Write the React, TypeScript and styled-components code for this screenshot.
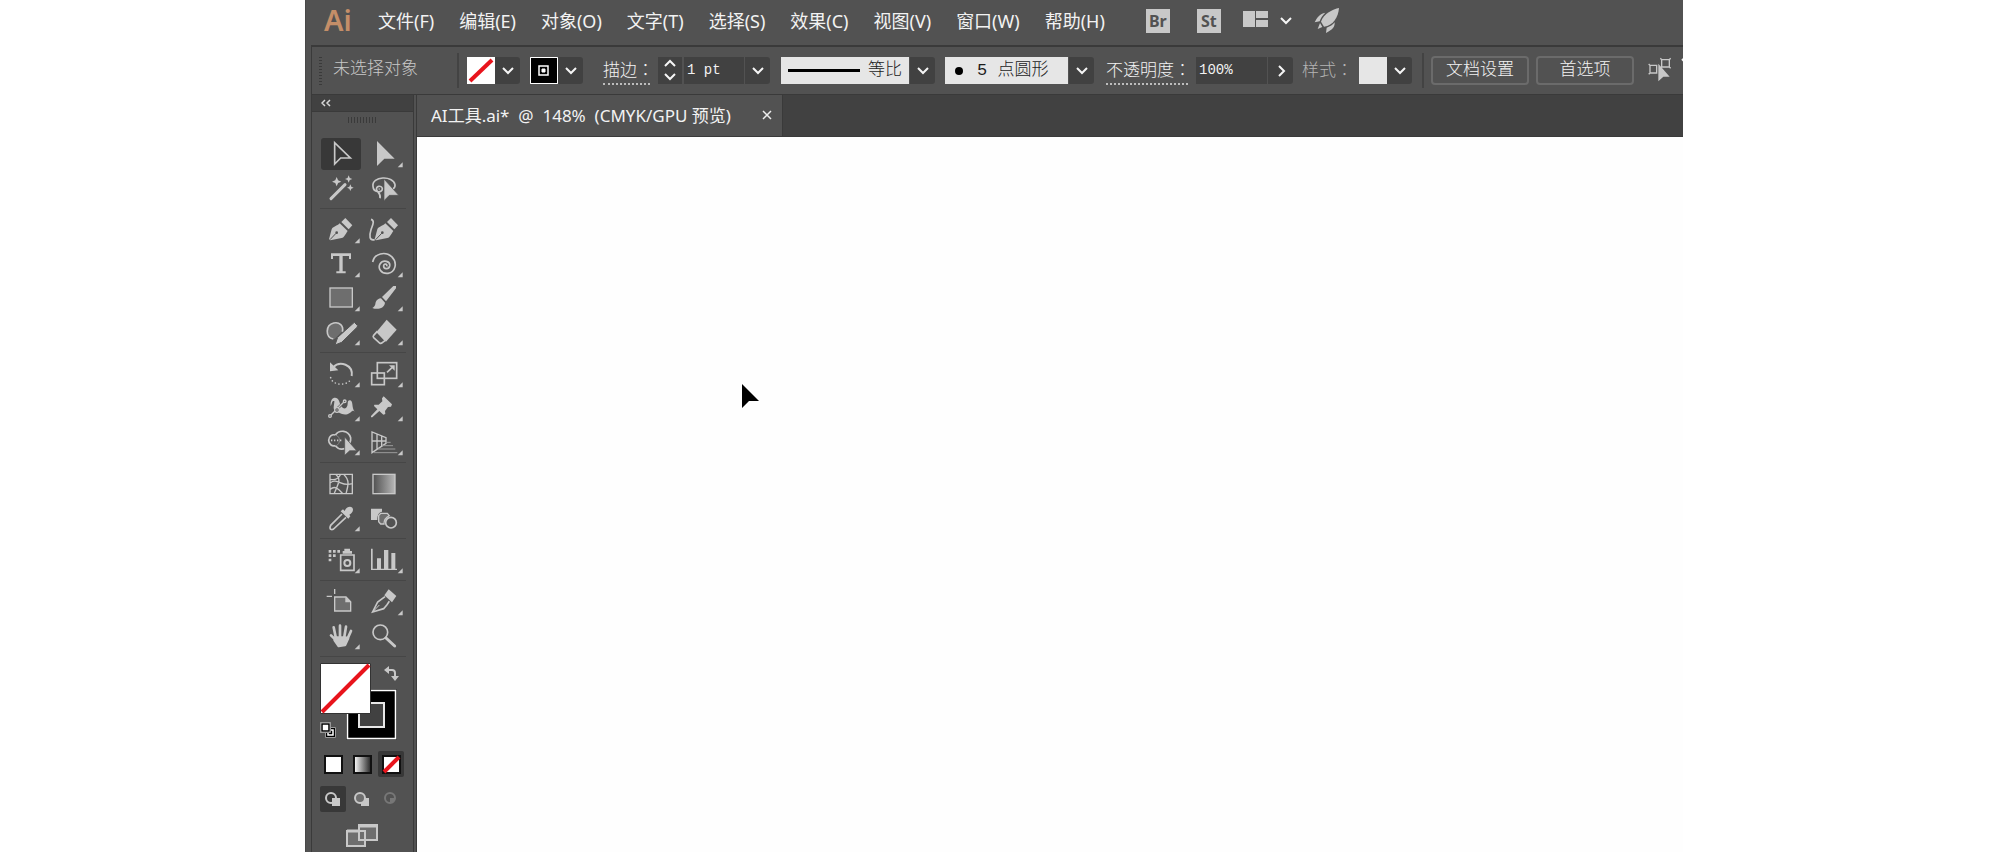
import React from 'react';
import styled, { createGlobalStyle, css } from 'styled-components';

const C = '#c8c8c8';
const BAR = '#525252';
const DARK = '#414141';
const LINE = '#3a3a3a';
const SHADE = '#6e6e6e';
const RED = '#e8141c';
const UI = `"Noto Sans", "Noto Sans CJK SC", sans-serif`;
const SONG = `"Liberation Mono", "Noto Sans CJK SC", monospace`;

const Global = createGlobalStyle`
  * { box-sizing: border-box; }
  body { margin: 0; background: #fff; font-family: ${UI}; color: #f2f2f2; }
  button, input, select { font: inherit; color: inherit; margin: 0; }
  button { border: 0; background: none; padding: 0; }
  svg { display: block; flex: none; }
`;

const AppWindow = styled.div`
  margin: 0 317px 0 305px;
  min-height: 100vh;
  display: flex;
  flex-direction: column;
  background: ${BAR};
  border-left: 1px solid #484848;
  overflow: hidden;
`;

const MenuBar = styled.header`
  height: 45px;
  display: flex;
  align-items: center;
  padding: 0 18px 3px;
  flex: none;
`;

const Logo = styled.div`
  width: 54px;
  padding-bottom: 3px;
  color: #c48e68;
  font-size: 29px;
  font-weight: 600;
  line-height: 38px;
`;

const Menus = styled.nav`
  display: flex;
  gap: 25px;
`;

const MenuButton = styled.button`
  font-size: 18px;
  line-height: 24px;
  white-space: nowrap;
`;

const AppLinks = styled.div`
  display: flex;
  align-items: center;
  margin-left: 41px;
  height: 24px;
`;

const AppBadge = styled.button<{ $gap: number }>`
  width: 24px;
  height: 24px;
  margin-right: ${p => p.$gap}px;
  background: ${C};
  color: ${BAR};
  font-size: 16px;
  line-height: 24px;
  font-weight: 700;
`;

const IconButton = styled.button<{ $gap?: number }>`
  margin-right: ${p => p.$gap ?? 0}px;
  display: flex;
`;

const Body = styled.div`
  flex: 1;
  margin-left: 5px;
  border-left: 1px solid ${LINE};
  border-top: 2px solid ${LINE};
  display: flex;
  flex-direction: column;
  min-width: 0;
`;

const ControlBar = styled.section`
  height: 48px;
  flex: none;
  display: flex;
  align-items: center;
  padding-left: 7px;
  border-bottom: 1px solid ${LINE};
  font-family: ${SONG};
  font-size: 17px;
  font-weight: 300;
  white-space: nowrap;
  overflow: hidden;
  > * { flex: none; }
`;

const Grip = styled.div`
  width: 3px;
  height: 28px;
  background: repeating-linear-gradient(${LINE} 0 1px, transparent 1px 3px);
`;

const Status = styled.div`
  width: 124px;
  margin-left: 11px;
  padding-bottom: 8px;
  color: #c8c8c8;
`;

const Divider = styled.div<{ $left?: number }>`
  width: 2px;
  height: 35px;
  margin-left: ${p => p.$left ?? 0}px;
  background: #434343;
`;

const Group = styled.div<{ $left: number }>`
  display: flex;
  margin-left: ${p => p.$left}px;
  height: 27px;
  border-radius: 0 3px 3px 0;
  overflow: hidden;
`;

const Arrow = styled.button<{ $split?: boolean }>`
  width: 25px;
  height: 27px;
  display: flex;
  align-items: center;
  justify-content: center;
  background: ${DARK};
  ${p => p.$split && css`margin-left: 1px;`}
`;

const Swatch = styled.button`
  width: 28px;
  height: 27px;
  background: #e6e6e6;
`;

const FieldLabel = styled.label<{ $width: number; $left: number; $plain?: boolean }>`
  width: ${p => p.$width}px;
  margin-left: ${p => p.$left}px;
  line-height: 22px;
  padding-top: 1px;
  color: ${p => (p.$plain ? '#b4b4b4' : '#f2f2f2')};
  border-bottom: 2px dotted ${p => (p.$plain ? 'transparent' : '#bdbdbd')};
  span { font-family: "Noto Sans CJK TC", sans-serif; }
`;

const TextField = styled.input<{ $width: number }>`
  width: ${p => p.$width}px;
  height: 27px;
  border: 0;
  padding: 0 0 2px 3px;
  background: ${DARK};
  font-size: 14px;
  outline: 0;
`;

const Stepper = styled.div`
  width: 24px;
  margin-right: 2px;
  background: ${DARK};
  display: flex;
  flex-direction: column;
  align-items: center;
  justify-content: space-between;
  padding: 2px 0;
`;

const LightField = styled.div<{ $width: number }>`
  width: ${p => p.$width}px;
  background: #e6e6e6;
  color: #1c1c1c;
  display: flex;
  align-items: center;
  padding-left: 7px;
`;

const LightSelect = styled.select<{ $left: number }>`
  appearance: none;
  border: 0;
  background: none;
  padding: 0;
  margin-left: ${p => p.$left}px;
  height: 27px;
  line-height: 24px;
  outline: 0;
`;

const OutlineButton = styled.button`
  width: 98px;
  height: 29px;
  margin-left: 7px;
  border: 2px solid #6b6b6b;
  border-radius: 4px;
  line-height: 24px;
`;

const Workspace = styled.div`
  flex: 1;
  display: flex;
  min-width: 0;
`;

const ToolPanel = styled.aside`
  width: 105px;
  flex: none;
  display: flex;
  flex-direction: column;
  border-right: 4px double ${LINE};
`;

const PanelHeader = styled.button`
  height: 17px;
  flex: none;
  background: ${DARK};
  border-bottom: 1px solid ${LINE};
  padding: 0 0 0 9px;
  display: flex;
  align-items: center;
`;

const PanelGrip = styled.div`
  width: 28px;
  height: 6px;
  margin: 5px 0 15px 36px;
  background: repeating-linear-gradient(90deg, ${LINE} 0 1px, transparent 1px 3px);
`;

const ToolGroup = styled.div`
  display: grid;
  grid-template-columns: 40px 40px;
  gap: 2px 3px;
  margin: 0 7px 5px 8px;
  padding: 0 0 4px 1px;
  border-bottom: 1px solid #464646;
`;

const ToolButton = styled.button<{ $active?: boolean }>`
  width: 40px;
  height: 32px;
  border-radius: 3px;
  background: ${p => (p.$active ? '#383838' : 'transparent')};
`;

const PaintArea = styled.div`
  position: relative;
  height: 89px;
  flex: none;
`;

const PaintSpot = styled.button<{ $x: number; $y: number }>`
  position: absolute;
  left: ${p => p.$x}px;
  top: ${p => p.$y}px;
`;

const ModeRow = styled.div<{ $bottom: number }>`
  display: flex;
  align-items: center;
  gap: 3px;
  padding-left: 8px;
  margin-bottom: ${p => p.$bottom}px;
`;

const ModeButton = styled.button<{ $active?: boolean }>`
  width: 26px;
  height: 26px;
  display: flex;
  align-items: center;
  justify-content: center;
  border-radius: 2px;
  background: ${p => (p.$active ? '#383838' : 'transparent')};
`;

const ScreenMode = styled.button`
  margin: 0 0 4px 34px;
  width: 33px;
`;

const DocumentArea = styled.main`
  flex: 1;
  min-width: 0;
  display: flex;
  flex-direction: column;
`;

const TabBar = styled.div`
  height: 42px;
  flex: none;
  background: ${DARK};
  border-bottom: 1px solid ${LINE};
  display: flex;
`;

const Tab = styled.div`
  display: flex;
  align-items: center;
  gap: 31px;
  padding: 0 10px 2px 14px;
  background: ${BAR};
  border-right: 1px solid ${LINE};
  font-size: 17px;
  white-space: pre;
`;

const Canvas = styled.div`
  position: relative;
  flex: 1;
  background: #fefefe;
`;

const Pointer = styled.svg`
  position: absolute;
  left: 325px;
  top: 247px;
`;

const chevrons = {
  down: 'M1 2 6 7 11 2',
  up: 'M1 7 6 2 11 7',
  right: 'M4 0 9 5 4 10',
};

const Chevron = ({ dir = 'down' }: { dir?: keyof typeof chevrons }) => (
  <svg width="12" height="10" viewBox="0 0 12 10" overflow="visible" fill="none" stroke="#f5f5f5" strokeWidth="2">
    <path d={chevrons[dir]} />
  </svg>
);

type Tool = { name: string; x: number; y: number; art: React.ReactNode; more?: boolean; active?: boolean };

const solid = { fill: C };
const line = { fill: 'none', stroke: C, strokeWidth: 5 };

const Nib = () => (
  <>
    <path {...solid} d="M124 51 136 39 157 61 146 73Z" />
    <path {...solid} d="M119 55 143 78C137 86 133 98 125 99L91 106 87 103 95 73C98 65 112 63 119 55Z" />
    <path d="M90 104 108 85" stroke={BAR} strokeWidth="3" />
    <circle cx="110" cy="83" r="4" fill={BAR} />
  </>
);

const star = (x: number, y: number, r: number) =>
  `M${x} ${y - r}L${x + r * 0.3} ${y - r * 0.3} ${x + r} ${y} ${x + r * 0.3} ${y + r * 0.3} ${x} ${y + r} ${x - r * 0.3} ${y + r * 0.3} ${x - r} ${y} ${x - r * 0.3} ${y - r * 0.3}Z`;

// Artwork is drawn at three units to the pixel; x and y are the origin of each icon's view box.
const groups: Tool[][] = [
  [
    { name: '选择工具', x: 63, y: 144, active: true, art: <path {...line} d="M104 158V222L122 204H151Z" /> },
    { name: '直接选择工具', x: 192, y: 144, more: true, art: <path {...solid} d="M231 153V228L253 206H284Z" /> },
    {
      name: '魔棒工具', x: 63, y: 246, art: (
        <>
          <path d="M93 326 135 284" stroke={C} strokeWidth="9" strokeLinecap="round" />
          <path {...solid} d={star(110, 275, 14) + star(146, 267, 11) + star(151, 293, 10)} />
        </>
      ),
    },
    {
      name: '套索工具', x: 192, y: 246, art: (
        <>
          <path {...line} d="M219 289C214 258 280 255 285 284 286 290 283 294 279 297M219 289C220 308 247 310 247 296 245 284 226 288 230 300 232 308 244 310 240 325M236 297h3" />
          <path {...solid} stroke={BAR} strokeWidth="2" d="M252 267V332L268 316H296Z" />
        </>
      ),
    },
  ],
  [
    { name: '钢笔工具', x: 63, y: 27, more: true, art: <Nib /> },
    {
      name: '曲率工具', x: 192, y: 27, art: (
        <>
          <g transform="translate(137 0)"><Nib /></g>
          <path {...line} d="M213 43C226 47 217 62 213 74 207 93 208 108 224 104" />
        </>
      ),
    },
    { name: '文字工具', x: 63, y: 129, more: true, art: <path {...solid} d="M93 145h60v17h-6v-9h-19v46h9v6h-28v-6h9v-46h-19v9h-6z" /> },
    { name: '螺旋线工具', x: 192, y: 129, more: true, art: <path {...line} d="M218 171C223 145 256 138 275 155 294 174 286 201 264 205 243 207 233 190 240 177 249 163 272 168 269 183 266 195 250 192 251 182 253 174 263 177 260 184" /> },
    { name: '矩形工具', x: 63, y: 231, more: true, art: <rect x="90" y="249" width="67" height="57" fill={SHADE} stroke={C} strokeWidth="4" /> },
    {
      name: '画笔工具', x: 192, y: 231, more: true, art: (
        <path {...solid} d="M288 250 288 243 280 243 246 276 258 289ZM243 280C228 282 227 292 226 298 224 305 220 308 217 309 232 315 253 311 255 293Z" />
      ),
    },
    {
      name: 'Shaper 工具', x: 63, y: 333, more: true, art: (
        <>
          <path d="M99 401C77 398 75 361 101 354 119 350 133 364 126 380L104 402Z" fill={SHADE} />
          <path {...line} d="M100 402C75 397 76 360 101 354 118 350 132 362 127 380" />
          <path {...solid} stroke={BAR} strokeWidth="3" d="M172 361 163 352 113 397 105 420 125 412 172 366Z" />
        </>
      ),
    },
    {
      name: '橡皮擦工具', x: 192, y: 333, more: true, art: (
        <>
          <path {...solid} d="M260 344 290 374 258 410 230 380Z" />
          <path {...line} d="M231 380 221 391Q218 395 221 398L239 414Q243 417 247 413L256 406Z" />
        </>
      ),
    },
  ],
  [
    {
      name: '旋转工具', x: 63, y: 24, more: true, art: (
        <>
          <path {...line} strokeWidth="6" d="M99 52C120 30 160 45 155 78" />
          <path {...solid} d="M90 37V64L115 61Z" />
          <path {...line} strokeLinecap="round" strokeDasharray="0 11" d="M92 83C98 108 143 108 152 88" />
        </>
      ),
    },
    {
      name: '比例缩放工具', x: 192, y: 24, more: true, art: (
        <>
          <rect {...line} x="232" y="38" width="58" height="47" />
          <rect {...line} x="215" y="69" width="38" height="35" />
          <path d="M261 67 276 53" stroke={C} strokeWidth="5" />
          <path {...solid} d="M267 46H284V62Z" />
        </>
      ),
    },
    {
      name: '宽度工具', x: 63, y: 126, more: true, art: (
        <>
          <path {...solid} d="M92 168C89 140 111 137 117 152 121 164 128 180 138 174 147 166 139 152 149 151 161 151 154 174 164 185 157 177 154 189 142 193 124 196 117 187 105 181 97 178 104 160 103 153 95 151 97 160 92 168Z" />
          <path d="M90 198 134 154" stroke={BAR} strokeWidth="8" />
          <path d="M90 198 134 154" stroke={C} strokeWidth="4" />
          <g fill={BAR} stroke={C} strokeWidth="4">
            <circle cx="90" cy="198" r="4" /><circle cx="111" cy="180" r="7" /><circle cx="134" cy="154" r="4" />
          </g>
          <circle cx="111" cy="180" r="2" fill={C} />
        </>
      ),
    },
    {
      name: '操控变形工具', x: 192, y: 126, more: true, art: (
        <path {...solid} d="M251 139 276 163 273 170 264 171 255 183 256 192 250 194 238 183 217 202H213V198L232 178 222 168 223 164H236L247 154 246 145Z" />
      ),
    },
    {
      name: '形状生成器工具', x: 63, y: 228, more: true, art: (
        <>
          <path {...line} d="M106 255C118 238 145 240 152 263 153 272 151 276 149 279M134 296C122 299 112 295 106 287M106 255C96 252 86 260 86 271 86 282 96 290 106 287" />
          <path {...line} stroke="#8a8a8a" strokeWidth="3" d="M108 256C122 260 122 282 108 287" />
          <path {...line} strokeDasharray="4 5" d="M93 271H125" />
          <path {...solid} stroke={BAR} strokeWidth="2" d="M134 261V316L149 302H170Z" />
        </>
      ),
    },
    {
      name: '透视网格工具', x: 192, y: 228, more: true, art: (
        <>
          <path {...line} strokeWidth="4" d="M216 246V308L258 280V263ZM231 251V298M245 257V288M216 273H258" />
          <path stroke="#9a9a9a" strokeWidth="3" d="M260 277H272M246 287H279M234 297H286M222 308H292" />
        </>
      ),
    },
  ],
  [
    {
      name: '网格工具', x: 63, y: 24, art: (
        <path {...line} strokeWidth="4" d="M90 43H157V101H90ZM91 68C112 52 125 82 156 71M91 88C106 74 118 90 128 101M108 44C126 58 112 76 103 100M132 44C152 62 142 84 138 101M92 58C108 62 118 52 121 44" />
      ),
    },
    {
      name: '渐变工具', x: 192, y: 24, art: (
        <>
          <defs><linearGradient id="toolGradient"><stop stopColor="#505050" /><stop offset="1" stopColor="#b8b8b8" /></linearGradient></defs>
          <rect x="219" y="43" width="66" height="58" fill="url(#toolGradient)" stroke={C} strokeWidth="4" />
        </>
      ),
    },
    {
      name: '吸管工具', x: 63, y: 126, more: true, art: (
        <>
          <path {...solid} d="M134 153C139 140 151 137 157 143 162 150 157 159 148 164L151 169 145 176 122 154 129 148Z" />
          <path {...line} d="M126 162 92 196Q88 204 92 208 98 211 104 204L138 172" />
        </>
      ),
    },
    {
      name: '混合工具', x: 192, y: 126, art: (
        <>
          <path {...solid} d="M213 146H246V155C237 156 232 164 232 180H213Z" />
          <path d="M242 160H262L268 167C258 172 252 180 252 192H242L236 185V167Z" fill={SHADE} stroke={C} strokeWidth="4" />
          <circle cx="273" cy="188" r="16" fill={BAR} stroke={C} strokeWidth="5" />
        </>
      ),
    },
  ],
  [
    {
      name: '符号喷枪工具', x: 63, y: 252, more: true, art: (
        <>
          <path {...solid} d="M86 270h8v8h-8zM99 270h8v8h-8zM112 270h8v8h-8zM86 283h8v8h-8zM99 283h8v8h-8zM86 296h8v8h-8zM133 266h17v7h6v8h-28v-8h5z" />
          <path {...line} d="M122 285H162V331H122Z" />
          <circle {...line} strokeWidth="6" cx="142" cy="309" r="9" />
        </>
      ),
    },
    {
      name: '柱形图工具', x: 192, y: 252, more: true, art: (
        <path {...solid} d="M213 266h5v60h73v4h-78zM231 295h12v31h-12zM252 270h13v56h-13zM274 279h12v47h-12z" />
      ),
    },
  ],
  [
    {
      name: '画板工具', x: 63, y: 33, art: (
        <>
          <path d="M104 66H138L152 80V108H104Z" fill={SHADE} stroke={C} strokeWidth="4" />
          <path {...solid} d="M136 66V82H154Z" />
          <path {...line} strokeWidth="4" d="M80 64H96M104 42V57" />
        </>
      ),
    },
    {
      name: '切片工具', x: 192, y: 33, more: true, art: (
        <>
          <path {...solid} d="M266 43 289 63 276 82 253 61Z" />
          <path {...line} d="M255 65 233 81 218 111 251 101 261 89 268 79" />
          <path {...line} strokeWidth="3" d="M218 111 238 90" />
        </>
      ),
    },
    {
      name: '抓手工具', x: 63, y: 135, more: true, art: (
        <g stroke={C} strokeLinecap="round" strokeLinejoin="round" strokeWidth="8" fill={C}>
          <path d="M107 186 101 157M120 184V152M133 185 138 155M143 190 153 168M106 194 93 181" />
          <path d="M107 188 138 188 144 190 135 210 116 213 104 196Z" />
        </g>
      ),
    },
    {
      name: '缩放工具', x: 192, y: 135, art: (
        <>
          <circle {...line} cx="241" cy="172" r="22" />
          <path d="M258 189 284 213" stroke={C} strokeWidth="9" strokeLinecap="round" />
        </>
      ),
    },
  ],
];

const menus = ['文件(F)', '编辑(E)', '对象(O)', '文字(T)', '选择(S)', '效果(C)', '视图(V)', '窗口(W)', '帮助(H)'];

export default function App() {
  return (
    <>
      <Global />
      <AppWindow>
        <MenuBar>
          <Logo>Ai</Logo>
          <Menus>{menus.map(m => <MenuButton key={m}>{m}</MenuButton>)}</Menus>
          <AppLinks>
            <AppBadge $gap={27}>Br</AppBadge>
            <AppBadge $gap={22}>St</AppBadge>
            <IconButton aria-label="排列文档" $gap={11}>
              <svg width="26" height="20" viewBox="0 0 26 20" fill={C}><path d="M0 0h12v16H0zM13 0h12v7H13zM13 9h12v7H13z" /></svg>
            </IconButton>
            <IconButton aria-label="工作区" $gap={22}><Chevron /></IconButton>
            <IconButton aria-label="GPU 性能">
              <svg width="26" height="28" viewBox="0 0 78 84" fill={C}>
                <path d="M75 3C57 6 29 20 21 44L30 59C58 56 73 30 75 3Z" />
                <path d="M34 17C17 20 9 32 2 46L17 43C20 32 26 25 34 17ZM62 46C56 54 49 58 38 62L36 78C55 68 63 61 62 46ZM18 48 25 60 11 66Z" />
              </svg>
            </IconButton>
          </AppLinks>
        </MenuBar>
        <Body>
          <ControlBar>
            <Grip />
            <Status>未选择对象</Status>
            <Divider />
            <Group $left={8}>
              <Swatch aria-label="填色">
                <svg width="28" height="27"><path d="M0 0h28v27H0z" fill="#fff" /><path d="M3 24 25 3" stroke={RED} strokeWidth="4" /></svg>
              </Swatch>
              <Arrow aria-label="填色选项"><Chevron /></Arrow>
            </Group>
            <Group $left={10}>
              <Swatch aria-label="描边颜色">
                <svg width="28" height="27" fill="#000" stroke="#fff"><path d="M.5.5h27v26H.5z" /><path strokeWidth="1.5" d="M9 9h9v9H9z" /><path fill="#fff" d="M12 12h3v3h-3z" /></svg>
              </Swatch>
              <Arrow aria-label="描边颜色选项"><Chevron /></Arrow>
            </Group>
            <FieldLabel htmlFor="stroke" $left={20} $width={47}>描边<span>：</span></FieldLabel>
            <Group $left={8}>
              <Stepper>
                <IconButton aria-label="增加"><Chevron dir="up" /></IconButton>
                <IconButton aria-label="减少"><Chevron /></IconButton>
              </Stepper>
              <TextField id="stroke" $width={60} defaultValue="1 pt" />
              <Arrow $split aria-label="描边粗细选项"><Chevron /></Arrow>
            </Group>
            <Group $left={11}>
              <LightField $width={128}>
                <svg width="72" height="3"><path d="M0 0h72v3H0z" /></svg>
                <LightSelect $left={8} aria-label="变量宽度配置文件"><option>等比</option></LightSelect>
              </LightField>
              <Arrow $split aria-label="配置文件选项"><Chevron /></Arrow>
            </Group>
            <Group $left={10}>
              <LightField $width={123}>
                <svg width="14" height="10"><circle cx="7" cy="5" r="4" /></svg>
                <LightSelect $left={11} aria-label="画笔定义"><option>5 点圆形</option></LightSelect>
              </LightField>
              <Arrow $split aria-label="画笔选项"><Chevron /></Arrow>
            </Group>
            <FieldLabel htmlFor="opacity" $left={12} $width={82}>不透明度<span>：</span></FieldLabel>
            <Group $left={8}>
              <TextField id="opacity" $width={71} defaultValue="100%" />
              <Arrow $split aria-label="不透明度选项"><Chevron dir="right" /></Arrow>
            </Group>
            <FieldLabel as="span" $left={9} $width={48} $plain>样式<span>：</span></FieldLabel>
            <Group $left={9}>
              <Swatch aria-label="图形样式" />
              <Arrow aria-label="图形样式选项"><Chevron /></Arrow>
            </Group>
            <Divider $left={10} />
            <OutlineButton>文档设置</OutlineButton>
            <OutlineButton>首选项</OutlineButton>
            <Group $left={14}>
              <IconButton aria-label="选择类似的对象" $gap={9}>
                <svg width="24" height="27" viewBox="0 0 72 81">
                  <path {...line} strokeWidth="4" d="M6 25H26V48H6ZM41 8H64V30H41ZM2 21 7 26M2 52 7 47M37 4 42 9M68 4 63 9M68 34 63 29M37 34 42 29" />
                  <path {...solid} d="M31 20V73L46 59H65Z" />
                </svg>
              </IconButton>
              <IconButton aria-label="选择类似的对象选项"><Chevron /></IconButton>
            </Group>
          </ControlBar>
          <Workspace>
            <ToolPanel>
              <PanelHeader aria-label="折叠面板">
                <svg width="10" height="8" fill="none" stroke="#d8d8d8" strokeWidth="1.5"><path d="M4 1 1 4 4 7M9 1 6 4 9 7" /></svg>
              </PanelHeader>
              <PanelGrip />
              {groups.map((g, i) => (
                <ToolGroup key={i}>
                  {g.map(t => (
                    <ToolButton key={t.name} aria-label={t.name} $active={t.active}>
                      <svg width="40" height="32" viewBox={`${t.x} ${t.y} 120 96`}>
                        {t.art}
                        {t.more && <path transform={`translate(${t.x} ${t.y})`} d="M116 73V88H101Z" fill={C} />}
                      </svg>
                    </ToolButton>
                  ))}
                </ToolGroup>
              ))}
              <PaintArea>
                <PaintSpot aria-label="描边" $x={34} $y={27}>
                  <svg width="51" height="51"><path d="M0 0h51v51H0z" fill="#333" /><path d="M1.500 1.500h48v48h-48z" fill="#000" stroke="#fff" strokeWidth="1.5" /><path d="M13 14h25v24H13z" fill={DARK} stroke="#e6e6e6" strokeWidth="2" /></svg>
                </PaintSpot>
                <PaintSpot aria-label="填色" $x={8} $y={1}>
                  <svg width="51" height="51"><path d="M.5.5h50v50H.5z" fill="#fff" stroke="#333" /><path d="M2 49 49 2" stroke={RED} strokeWidth="4" /></svg>
                </PaintSpot>
                <PaintSpot aria-label="互换填色和描边" $x={72} $y={4}>
                  <svg width="15" height="16" fill={C}><path d="M0 4 5 0v3h3q4 0 4 4v3h3l-4 5-4-5h3V7q0-2-2-2H5v3z" /></svg>
                </PaintSpot>
                <PaintSpot aria-label="默认填色和描边" $x={8} $y={60}>
                  <svg width="16" height="16">
                    <path d="M5.500 5.500h10v10h-10z" fill="#000" stroke="#999" />
                    <path d="M8 8h5v5H8z" fill="none" stroke="#fff" strokeWidth="1.500" />
                    <path d="M.5.5h10v10H.5z" fill="#fff" stroke="#999" />
                    <path d="M2 2h7v7H2z" fill="#fff" stroke="#000" strokeWidth="1.500" />
                  </svg>
                </PaintSpot>
              </PaintArea>
              <ModeRow $bottom={9}>
                <ModeButton aria-label="颜色"><svg width="19" height="19"><path d="M1 1h17v17H1z" fill="#fff" stroke="#111" strokeWidth="2" /></svg></ModeButton>
                <ModeButton aria-label="渐变">
                  <svg width="19" height="19"><defs><linearGradient id="modeGradient"><stop stopColor="#fff" /><stop offset="1" stopColor="#222" /></linearGradient></defs><path d="M1 1h17v17H1z" fill="url(#modeGradient)" stroke="#111" strokeWidth="2" /></svg>
                </ModeButton>
                <ModeButton $active aria-label="无"><svg width="19" height="19"><path d="M1 1h17v17H1z" fill="#fff" stroke="#111" strokeWidth="2" /><path d="M2 17 17 2" stroke={RED} strokeWidth="4" /></svg></ModeButton>
              </ModeRow>
              <ModeRow $bottom={11}>
                <ModeButton $active aria-label="正常绘图"><svg width="16" height="16"><circle cx="6" cy="7" r="5" {...line} strokeWidth="2" /><path d="M7 7h8v8H7z" fill={C} /></svg></ModeButton>
                <ModeButton aria-label="背面绘图"><svg width="16" height="16"><path d="M7 7h8v8H7z" fill={C} /><circle cx="6" cy="7" r="5" fill={SHADE} stroke={C} strokeWidth="2" /></svg></ModeButton>
                <ModeButton aria-label="内部绘图"><svg width="14" height="16"><circle cx="6" cy="7" r="5" fill="none" stroke="#777" strokeWidth="2" /><path d="M6 7h5q0 5-5 5z" fill="#777" /></svg></ModeButton>
              </ModeRow>
              <ScreenMode aria-label="更改屏幕模式">
                <svg width="33" height="25" fill={SHADE} stroke={C} strokeWidth="2"><path d="M1 8h18v15H1zM13 2h18v15H13z" /><path d="M1 8h11M13 3h18" strokeWidth="3" /></svg>
              </ScreenMode>
            </ToolPanel>
            <DocumentArea>
              <TabBar>
                <Tab>
                  <span>AI工具.ai*  @  148%  (CMYK/GPU 预览)</span>
                  <IconButton aria-label="关闭">
                    <svg width="10" height="10" stroke="#eee" strokeWidth="1.5"><path d="M1 1 9 9M9 1 1 9" /></svg>
                  </IconButton>
                </Tab>
              </TabBar>
              <Canvas>
                <Pointer width="18" height="25"><path d="M0 0V24L7 17H17Z" /></Pointer>
              </Canvas>
            </DocumentArea>
          </Workspace>
        </Body>
      </AppWindow>
    </>
  );
}
